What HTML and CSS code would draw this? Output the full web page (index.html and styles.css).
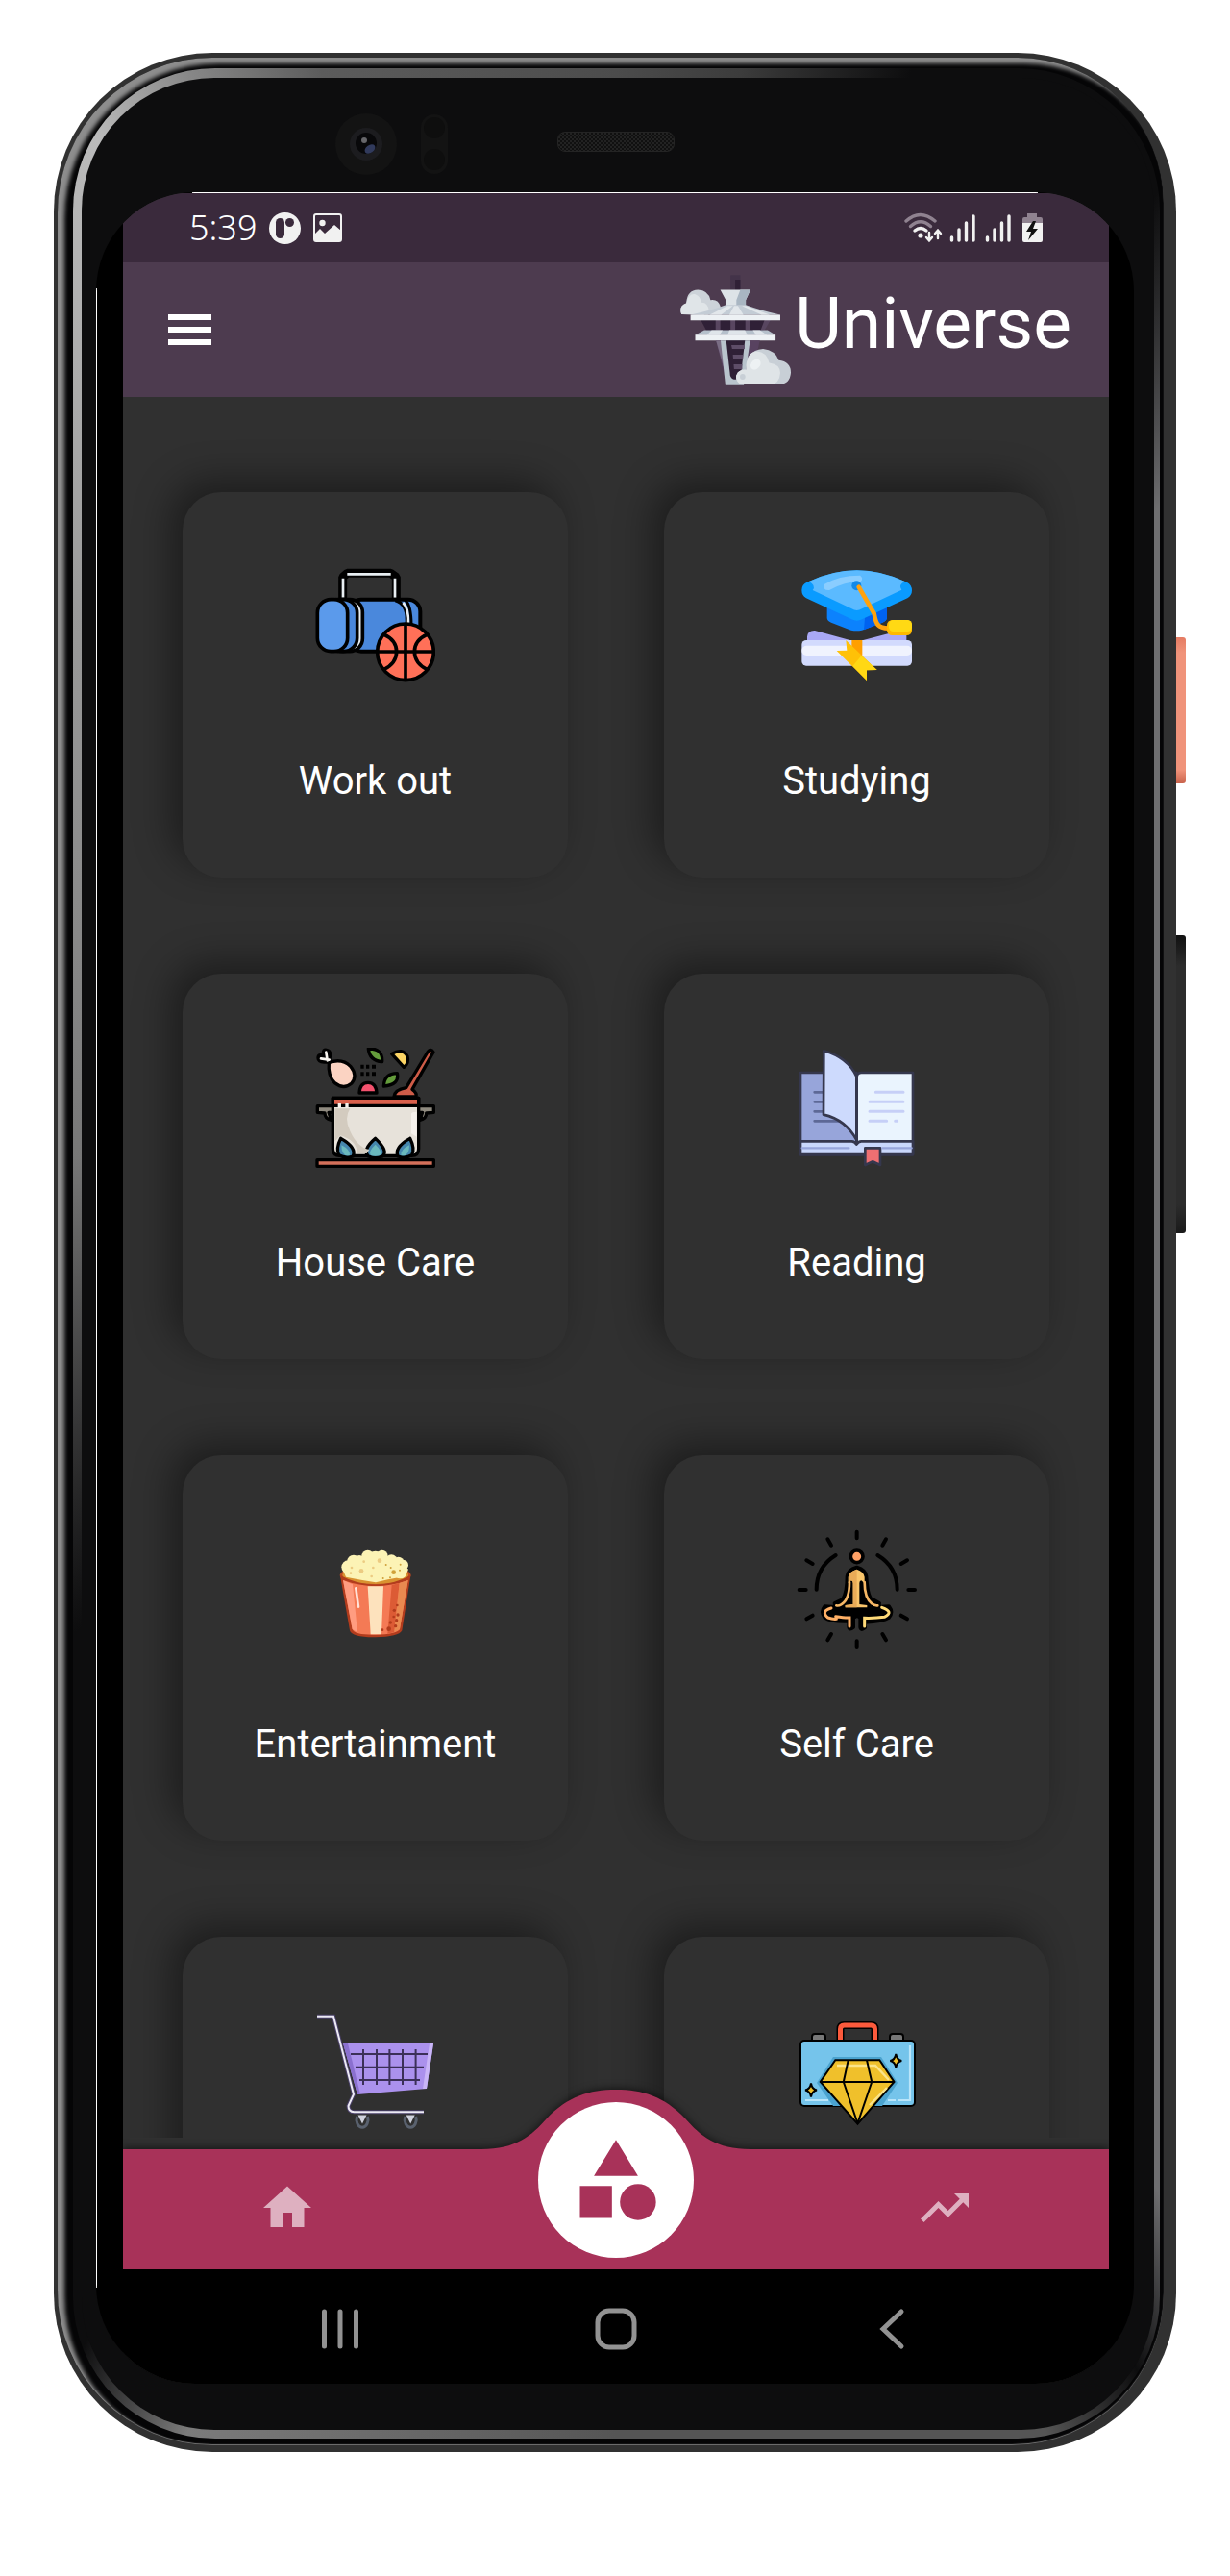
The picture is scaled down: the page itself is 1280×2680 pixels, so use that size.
FILE: index.html
```html
<!DOCTYPE html>
<html lang="en">
<head>
<meta charset="utf-8">
<title>Universe</title>
<meta name="viewport" content="width=device-width, initial-scale=1">
<link rel="stylesheet" href="styles.css">
</head>
<body>
<div class="phone">
  <span class="side-key side-key-power"></span>
  <span class="side-key side-key-volume"></span>
  <div class="rim">
    <div class="band">
      <div class="face">
        <div class="sensors">
          <svg class="camera" viewBox="0 0 117 64" aria-hidden="true">
            <circle cx="32" cy="32" r="32" fill="#131313"/>
            <circle cx="32" cy="32" r="17" fill="#1c1c1f"/>
            <circle cx="32" cy="31" r="11" fill="#08080a"/>
            <ellipse cx="36" cy="37" rx="6" ry="4" fill="#313a5c" transform="rotate(-35 36 37)"/>
            <circle cx="30" cy="28" r="3" fill="#66666a"/>
            <rect x="89" y="1" width="28" height="62" rx="14" fill="#131313"/>
            <circle cx="103" cy="15" r="11" fill="#0e0e0e"/>
            <circle cx="103" cy="48" r="11" fill="#0e0e0e"/>
          </svg>
          <span class="speaker"></span>
        </div>
        <div class="glass">
          <div class="screen">
            <div class="status">
              <span class="clock">5:39</span>
              <svg class="status-app" viewBox="0 0 33 33" aria-hidden="true"><circle cx="16.500" cy="16.500" r="16.500" fill="#f1f1f1"/><rect x="7" y="6" width="9" height="21" rx="4.500" fill="#3a2a3c"/><circle cx="21.500" cy="10.500" r="4.500" fill="#3a2a3c"/></svg>
              <svg class="status-photo" viewBox="0 0 30 30" aria-hidden="true"><rect x="1" y="1" width="28" height="28" rx="2" fill="none" stroke="#f1f1f1" stroke-width="2"/><circle cx="9.500" cy="10" r="3.200" fill="#f1f1f1"/><path d="M2 21l5-5 5 5 10-9 7 6v10H2z" fill="#f1f1f1"/></svg>
              <svg class="status-signals" viewBox="0 0 144 32" aria-hidden="true">
                <g fill="none" stroke-width="3.400" stroke-linecap="round">
                  <path d="M2 9Q16.500-4 32 9" stroke="#8f8290"/>
                  <path d="M6.500 14.500Q17 5 27.500 14.500" stroke="#8f8290"/>
                  <path d="M11 19Q17 14 23 19" stroke="#f1f1f1"/>
                  <path d="M26 21v8m-3-3l3 3.500 3-3.500M35 27v-8m-3 3l3-3.500 3 3.500" stroke="#f1f1f1" stroke-width="2.400"/>
                  <path d="M49.500 26v3M57 18v11M64.500 11v18M72 4v25M86.500 26v3M94 18v11M101.500 11v18M109 4v25" stroke="#f1f1f1"/>
                </g>
                <circle cx="17" cy="24" r="2.600" fill="#f1f1f1"/>
                <path d="M128 1h10v4h4q2 0 2 2v4h-21V7q0-2 2-2h3z" fill="#8f8290"/>
                <path d="M123 11h21v18q0 2-2 2h-17q-2 0-2-2z" fill="#f1f1f1"/>
                <path d="M134 9l-7 11h5l-3 9 10-12h-5l3-8z" fill="#111"/>
              </svg>
            </div>
            <header class="app-bar">
              <button class="menu" aria-label="Menu"><span></span><span></span><span></span></button>
              <div class="brand">
                <svg class="brand-logo" viewBox="165 737 282 346" preserveAspectRatio="none" aria-hidden="true">
                  <path d="M293 738h25v50h-25z" fill="#433349"/><path d="M305 752h13v36h-13z" fill="#2f2036"/>
                  <path d="M168 860Q160 835 180 826Q182 785 210 784Q236 785 242 816Q262 812 268 838L235 862z" fill="#cdd3d9"/>
                  <path d="M168 860Q160 835 180 826Q185 795 202 797Q218 804 218 824Q235 822 238 850L225 862z" fill="#e0e5e8"/>
                  <path d="M267 784h77l-12 32v18h-51v-18z" fill="#dde3e7"/><path d="M318 784h26l-12 32v18h-24v-18z" fill="#a9b6c2"/>
                  <path d="M191 862Q250 846 281 831h51Q370 848 420 862z" fill="#c3ccd5"/>
                  <path d="M240 862l45-28h14l-30 28zM290 862l12-28h10l14 28zM372 862l-50-28h11l60 28z" fill="#e2e7eb"/>
                  <path d="M217 878h179l-20 34H232z" fill="#2f2036"/>
                  <path d="M255 878h12v32h-12zM293 878h12v32h-12zM331 878h12v32h-12zM380 878h16l-16 32h-10z" fill="#584660"/>
                  <path d="M191 862h229v17H191z" fill="#edf1f4"/>
                  <path d="M226 910h162l20 15H203z" fill="#b5c0cb"/><path d="M245 910h28l-8 15h-32zM290 910h40l6 15h-50zM350 910h18l18 15h-28z" fill="#dfe5ea"/>
                  <path d="M203 924h205v18H203z" fill="#edf1f4"/>
                  <path d="M256 942h112l-22 120h-66z" fill="#584260"/>
                  <path d="M256 942h14l14 120z" fill="#7a6d84"/>
                  <path d="M268 942h75l-16 140h-47z" fill="#b9c4cd"/><path d="M282 942h48l-12 122h-16q-8-1-10-13z" fill="#2f2036"/>
                  <path d="M295 957h34v12h-32zM299 987h26v15h-25zM301 1017h22v15h-21z" fill="#5e4d68"/>
                  <path d="M318 1080Q300 1062 312 1042Q320 1032 333 1034Q330 975 376 969Q408 974 416 1004Q447 1008 447 1043Q445 1078 418 1080z" fill="#c8cfd6"/>
                  <path d="M318 1080Q300 1062 312 1042Q320 1032 333 1034Q332 978 360 976Q386 978 392 1012Q420 1016 420 1044Q418 1078 396 1080z" fill="#dfe4e7"/>
                  <ellipse cx="357" cy="1017" rx="12" ry="17" fill="#edf1f3" transform="rotate(25 357 1017)"/><ellipse cx="324" cy="1056" rx="7" ry="9" fill="#c8cfd6"/>
                </svg>
                <span class="brand-name">Universe</span>
              </div>
            </header>
            <main class="categories">
              <button class="card">
                <svg viewBox="84 90 375 375" aria-hidden="true">
                  <path d="M170 190v-66l14-12h136l17 12v66" fill="none" stroke="#000" stroke-width="27" stroke-linejoin="bevel"/><path d="M171 188v-60M184 115h136M333 128v60" fill="none" stroke="#e8eef2" stroke-width="8"/>
                  <rect x="190" y="194" width="222" height="162" rx="38" fill="#4a88dc" stroke="#000" stroke-width="12"/>
                  <path d="M334 197q36 10 36 60v60" fill="none" stroke="#000" stroke-width="10"/><path d="M358 204q20 18 17 70" fill="none" stroke="#e8eef2" stroke-width="8"/><path d="M364 196q20 14 20 80" fill="none" stroke="#000" stroke-width="9"/>
                  <rect x="130" y="194" width="102" height="162" rx="40" fill="#e8eef2" stroke="#000" stroke-width="11"/><rect x="112" y="194" width="103" height="162" rx="42" fill="#4a88dc" stroke="#000" stroke-width="11"/>
                  <rect x="91" y="194" width="94" height="162" rx="42" fill="#5b9aeb" stroke="#000" stroke-width="11"/>
                  <circle cx="366" cy="358" r="88" fill="#ff7058" stroke="#000" stroke-width="11"/><path d="M366 270v176M278 357h176M298 303q40 18 40 54t-40 56M434 303q-40 18-40 54t40 56" fill="none" stroke="#000" stroke-width="11"/>
                </svg>
                <span>Work out</span>
              </button>
              <button class="card">
                <svg viewBox="86 90 375 375" aria-hidden="true">
                  <path d="M181 215h187v37q-2 10-14 14l-64 24q-17 4-34 0l-62-24q-12-5-13-14z" fill="#0c82fd"/><path d="M300 240l68-25v37q-2 10-14 14l-58 23z" fill="#0062f0"/>
                  <path d="M102 165q0-18 16-25Q200 103 274 103T430 140q16 8 16 26 0 15-14 24l-142 66q-16 8-32 0l-142-66q-14-8-14-25z" fill="#0a9bff"/>
                  <path d="M125 138Q200 103 274 103T424 138q-22 10-10 26l-124 59q-16 10-32 0l-122-58q12-14-11-27z" fill="#5bbaff"/>
                  <path d="M172 147q44-28 112-28 12 9 2 19-50 0-98 27-22 1-16-18z" fill="#8acdff"/><circle cx="273" cy="151" r="15" fill="#1189e8"/>
                  <path d="M119 326v-16q2-20 24-19l118 32zM291 322l86-23 52 4v23z" fill="#a9a8f5"/>
                  <rect x="102" y="321" width="344" height="80" rx="14" fill="#d2dafd"/><rect x="102" y="338" width="344" height="31" rx="15" fill="#f0f3fe"/>
                  <path d="M258 321h33v80h-33z" fill="#ff9f00"/><path d="M240 321l97 93-32 1v32l-94-93 32-1z" fill="#ffc107"/><path d="M288 370l49 44-32 1v32l-44-45z" fill="#ffd814"/>
                  <path d="M280 155l48 83c6 34 12 45 45 46" fill="none" stroke="#ffa20e" stroke-width="14" stroke-linecap="round"/>
                  <rect x="368" y="258" width="78" height="48" rx="16" fill="#ffb900"/><rect x="374" y="258" width="72" height="36" rx="14" fill="#ffd914"/>
                </svg>
                <span>Studying</span>
              </button>
              <button class="card">
                <svg viewBox="84 90 375 375" aria-hidden="true">
                  <g stroke="#000" stroke-width="10" stroke-linejoin="round">
                    <path d="M91 272h50v20h-15l8 24q-20-4-20-22l-23-2zM454 272h-50v20h15l-8 24q20-4 20-22l23-2z" fill="#8f8a7f"/>
                    <path d="M139 247h268v158q0 22-22 22H161q-22 0-22-22z" fill="#e7e2da"/>
                    <path d="M139 247h268v24H139z" fill="#d9604c"/>
                    <path d="M90 440h364v20H90z" fill="#d4705a"/>
                    <path d="M330 243q2-22 38-28l68-113q9-10 17 2l-66 116q16 12 12 23z" fill="#cf5c48"/>
                    <path d="M127 136q42-14 67 12 24 30 3 54-24 20-52-2-22-22-18-64z" fill="#fbd3c2"/>
                    <path d="M250 93q46-2 43 41-40-4-43-41zM340 170q8 36-42 40 2-40 42-40z" fill="#649c3b"/>
                    <path d="M323 109q34-20 49 8 6 22-11 34z" fill="#fcd565"/><path d="M222 231q2-32 27-32t27 32z" fill="#f4526e"/>
                    <path d="M164 373q50 28 38 56-24 8-44-4-10-20 6-52zM272 373q42 40 22 56-22 8-44 0-20-20 22-56zM380 373q-50 28-38 56 24 8 44-4 10-20-6-52z" fill="#4586ad"/>
                  </g>
                  <path d="M145 280h48q-20 30 0 70 22 50 60 58l-8 12h-30q0-40-52-56l-18 18z" fill="#d3cbbf"/>
                  <path d="M384 296q0-6 17-6v78l-17-10zM155 264h10v14h-10zM178 264h10v14h-10z" fill="#f5f1ec"/>
                  <path d="M166 394q28 14 26 32-26 6-26-32zM272 392q24 22 14 34-14 5-28 0-10-12 14-34zM378 394q-28 14-26 32 26 6 26-32z" fill="#6ab9bd"/>
                  <path d="M88 122q0-16 16-14 0-18 16-16 16 2 16 20l-4 28-20 0q-24-2-24-18z" fill="#000"/><path d="M102 124l26 4M118 104l4 26" stroke="#f7f4ef" stroke-width="8" stroke-linecap="round"/>
                  <path d="M226 143h10v12h-10zM243 143h10v12h-10zM261 143h12v12h-12zM226 166h10v12h-10zM243 166h10v12h-10zM261 166h12v12h-12z" fill="#000"/>
                </svg>
                <span>House Care</span>
              </button>
              <button class="card">
                <svg viewBox="86 90 375 375" aria-hidden="true">
                  <g stroke="#35374d" stroke-width="8" stroke-linejoin="round">
                    <path d="M98 168h175v256H98z" fill="#97a5da"/><path d="M274 180q2-12 14-12h161v256H274z" fill="#eaf4fe"/>
                    <path d="M98 382h160q10 0 15 10 5-10 15-10h161v41H98z" fill="#c9d7fb"/>
                    <path d="M142 229h30M142 259h30M142 289h30M142 319h75" stroke="#5d6896" stroke-linecap="round"/>
                    <path d="M171 100Q245 120 273 180v198Q240 315 170 299z" fill="#cddafd"/>
                    <path d="M300 403h47v53l-24-11-23 11z" fill="#ee6f72"/>
                  </g>
                  <path d="M333 229h86M314 259h105M314 289h105M314 319h53M394 319h6" stroke="#c6cff7" stroke-width="9" stroke-linecap="round"/><path d="M103 403h146M354 403h91" stroke="#97a5da" stroke-width="7" stroke-linecap="round"/><path d="M274 180v212" stroke="#35374d" stroke-width="6"/>
                </svg>
                <span>Reading</span>
              </button>
              <button class="card">
                <svg viewBox="84 60 375 375" aria-hidden="true">
                  <ellipse cx="272" cy="204" rx="111" ry="34" fill="#b94a24"/><ellipse cx="272" cy="203" rx="103" ry="28" fill="#d99230"/>
                  <path d="M162 204Q272 262 382 204L355 376Q345 396 272 397T192 376z" fill="#b23c1d"/>
                  <path d="M171 219Q272 256 374 219L348 372Q338 388 272 389T200 372z" fill="#f47a55"/>
                  <path d="M171 219l30 13 15 150-16-10z" fill="#ff9c80"/><path d="M248 238h49l-6 150h-34z" fill="#fde2bd"/><path d="M323 234l24-6-16 153-21 5z" fill="#dc5b35"/><path d="M347 228l27-9-26 153-17 9z" fill="#e98950"/>
                  <g fill="#fcf3b5"><circle cx="187" cy="178" r="21"/><circle cx="204" cy="160" r="20"/><circle cx="222" cy="158" r="17"/><circle cx="248" cy="144" r="19"/><circle cx="272" cy="150" r="22"/><circle cx="293" cy="143" r="18"/><circle cx="322" cy="158" r="19"/><circle cx="344" cy="164" r="18"/><circle cx="358" cy="172" r="17"/><circle cx="350" cy="194" r="20"/><path d="M172 190l30-40h135l38 35-10 22-54 10-38 9-46-8-47-9z"/></g>
                  <g fill="#eccb82"><circle cx="285" cy="158" r="7"/><circle cx="228" cy="190" r="7"/><circle cx="236" cy="161" r="4"/><circle cx="198" cy="180" r="4"/><circle cx="260" cy="207" r="4"/><circle cx="195" cy="197" r="4"/><circle cx="265" cy="180" r="4"/></g>
                  <g fill="#d0a13a"><circle cx="329" cy="194" r="7"/><circle cx="305" cy="171" r="3"/><circle cx="320" cy="180" r="3"/><circle cx="348" cy="188" r="3"/><circle cx="296" cy="213" r="3"/><circle cx="318" cy="211" r="3"/><circle cx="350" cy="170" r="3"/></g>
                  <g fill="#b23c1d"><circle cx="340" cy="297" r="4"/><circle cx="331" cy="313" r="5"/><circle cx="342" cy="327" r="5"/><circle cx="329" cy="333" r="4"/><circle cx="338" cy="344" r="5"/><circle cx="319" cy="351" r="5"/><circle cx="335" cy="362" r="5"/><circle cx="314" cy="371" r="7"/><circle cx="294" cy="374" r="4"/></g>
                  <path d="M211 244l8 58" stroke="#ffe3da" stroke-width="8" stroke-linecap="round"/>
                </svg>
                <span>Entertainment</span>
              </button>
              <button class="card">
                <svg viewBox="86 90 375 375" aria-hidden="true">
                  <g fill="none" stroke="#000" stroke-width="12" stroke-linecap="round"><path d="M274 98v20M183 121l11 19M365 121l-11 19M117 187l19 11M431 187l-19 11M94 279h21M435 279h20M117 370l19-11M431 370l-19-11M183 436l11-19M365 436l-11-19M274 439v20M148 278q0-70 60-107M400 278q0-70-61-107"/></g>
                  <circle cx="274" cy="175" r="19" fill="#ffa066" stroke="#000" stroke-width="11"/>
                  <path d="M274 209q27 8 29 28 3 50 13 68l28 16-4 12 34-2q14 18 0 34-20 12-75 15v17q-12 10-14-1v-30l-10-7-12 7v30q-12 10-14-1v-18q-57 2-75-12-14-17 0-34l33 2-2-12 25-12q14-22 14-72 2-20 30-28z" fill="#000" stroke="#000" stroke-width="12" stroke-linejoin="round"/>
                  <path d="M274 215q22 8 24 24v20l-10-9q-6 0-6 8v66l24 3v7h-68v-7l24-3v-66q0-8-6-8l-9 9v-20q2-16 27-24z" fill="#f9c56b"/><path d="M274 215q-24 8-26 24v20l8-9q6 0 6 8v66l-24 3v7h36z" fill="#e9ab57"/>
                  <path d="M251 255q0 56-26 70-8 5-15 3M298 255q0 50 23 67 8 7 18 6" fill="none" stroke="#f6b765" stroke-width="8" stroke-linecap="round"/>
                  <path d="M194 336q-34 10-10 30 14 5 26 4M208 362q30 5 43 4v27" fill="none" stroke="#ffb066" stroke-width="9" stroke-linecap="round"/><path d="M352 334q40 14 8 30-30 4-62 3v26" fill="none" stroke="#ffda78" stroke-width="9" stroke-linecap="round"/>
                </svg>
                <span>Self Care</span>
              </button>
              <button class="card" aria-label="Shopping">
                <svg viewBox="0 0 125 125" aria-hidden="true">
                  <path d="M29 34h94l-7 47-72 6z" fill="#ab91ed"/><path d="M119 34h4l-7 47h-4z" fill="#c9b5f7"/><path d="M29 34l15 53h3l-13-53z" fill="#8a70cf"/>
                  <path d="M37 45h80M42 58.700h71M46 72h63M50 40v37M64 40v37M77.400 40v37M91 40v37M104.600 40v37" stroke="#3b2f58" stroke-width="2"/>
                  <path d="M2 5.700h17L40 87l-5.500 12q0 6 6 6.300H113" fill="none" stroke="#4a4069" stroke-width="4"/><path d="M2 5.700h17L40 87l-5.500 12q0 6 6 6.300H113" fill="none" stroke="#eceaf4" stroke-width="2"/>
                  <path d="M43.500 110a6 8 0 1 0 11 0M93.700 110a6 8 0 1 0 11 0" fill="none" stroke="#59616e" stroke-width="3"/><path d="M44.500 108.500h9l-4.500 9zM94.700 108.500h9l-4.500 9z" fill="#cfd2dd"/>
                </svg>
              </button>
              <button class="card" aria-label="Business">
                <svg viewBox="0 0 125 125" aria-hidden="true">
                  <path d="M16 32v-5q0-3 3-3h8q3 0 3 3v5M97 32v-5q0-3 3-3h8q3 0 3 3v5" fill="#777" stroke="#000" stroke-width="2"/>
                  <path d="M45.500 32V19q0-4 4-4h28q4 0 4 4v13" fill="none" stroke="#000" stroke-width="8"/><path d="M45.500 31V19q0-4 4-4h28q4 0 4 4v12" fill="none" stroke="#fb5a3c" stroke-width="5"/>
                  <rect x="4" y="31" width="119" height="68" rx="4" fill="#75c4eb" stroke="#000" stroke-width="2"/>
                  <path d="M118 36v57h-12m-3 0h-8M9 93h24" fill="none" stroke="#b9e5fa" stroke-width="2.200"/>
                  <path d="M38 48h50l17 27-16 24H38L21 75z" fill="#4ba3cf"/>
                  <path d="M40.300 51.300h46L101.500 74l-38 43.700L24.700 74z" fill="#f0c02b" stroke="#000" stroke-width="2"/><path d="M42 57h40l14 15M94 80L76 98" fill="none" stroke="#fbe48a" stroke-width="2.400"/>
                  <path d="M24.700 74h77M53.700 51.300L48.800 74l14.700 43M73 51.300L78.200 74l-14.700 43" fill="none" stroke="#000" stroke-width="2"/>
                  <path d="M103.300 45q1 6 6 7-5 1-6 7-1-6-6-7 5-1 6-7zM15 75.500q1 6 6 7-5 1-6 7-1-6-6-7 5-1 6-7z" fill="#f0c02b" stroke="#000" stroke-width="2"/>
                </svg>
              </button>
            </main>
            <nav class="tabs">
              <svg class="tabs-bump" viewBox="0 0 280 63" aria-hidden="true"><path d="M0 62C36 62 52 48 68 30C90 7 112 0 140 0S190 7 212 30C228 48 244 62 280 62v1H0z" fill="#a83259"/></svg>
              <a class="tab" href="#home" aria-label="Home"><svg viewBox="0 0 24 24"><path d="M10 20v-6h4v6h5v-8h3L12 3 2 12h3v8z"/></svg></a>
              <a class="tab tab-active" href="#categories" aria-label="Categories"><svg viewBox="0 0 24 24"><path d="M12 2l-5.500 9h11zM3 13.500h8v8H3z"/><circle cx="17.500" cy="17.500" r="4.500"/></svg></a>
              <a class="tab" href="#trends" aria-label="Trends"><svg viewBox="0 0 24 24"><path d="M16 6l2.290 2.290-4.880 4.880-4-4L2 16.590 3.410 18l6-6 4 4 6.300-6.290L22 12V6z"/></svg></a>
            </nav>
            <div class="system-nav">
              <button aria-label="Recents"><svg viewBox="0 0 44 44"><path d="M5.500 4v36M22 4v36M38.500 4v36"/></svg></button>
              <button aria-label="Home"><svg viewBox="0 0 44 44"><rect x="3" y="3" width="38" height="38" rx="12"/></svg></button>
              <button aria-label="Back"><svg viewBox="0 0 44 44"><path d="M32 4L13 22l19 18"/></svg></button>
            </div>
          </div>
        </div>
      </div>
    </div>
  </div>
</div>
</body>
</html>
```
FILE: styles.css
```css
* { box-sizing: border-box; }

body {
  margin: 0;
  padding: 55px 56px 129px;
  background: #fff;
  font-family: Roboto, sans-serif;
  color: #fff;
}

button {
  margin: 0;
  padding: 0;
  border: 0;
  background: none;
  color: inherit;
  font: inherit;
  cursor: pointer;
}

svg { display: block; }

/* Phone body: each layer is padded to reveal the one beneath it */
.phone {
  position: relative;
  display: flex;
  height: calc(100vh - 184px);
  min-height: 1200px;
  padding: 5px 13px 7px 4px;
  border-radius: 165px;
  background: #313131;
}

.rim {
  flex: 1;
  display: flex;
  padding: 11px 4px 7px 16px;
  border-radius: 161px 152px 158px 161px;
  background: #050506;
  box-shadow: inset 7px 6px 4px #8d8d8d, inset 0 -1px 1px #777;
}

.band {
  flex: 1;
  display: flex;
  padding: 10px 6px 9px 9px;
  border-radius: 148px;
  background: conic-gradient(#4c4c4c 0deg, #3c3c3c 6deg, #0d0d0e 14deg, #0d0d0e 27deg, #6e6e70 36deg, #6e6e70 150deg, #0d0d0e 155deg, #555 160deg, #555 180deg, #7b7b7b 200deg, #0d0d0e 206deg, #0d0d0e 235deg, #777 280deg, #999 320deg, #bbb 335deg, #888 340deg, #5c5c5c 346deg, #4c4c4c 360deg);
}

.face {
  flex: 1;
  display: flex;
  flex-direction: column;
  min-width: 0;
  padding: 0 21px 48px 15px;
  border-radius: 138px;
  background: #0d0d0e;
}

.side-key {
  position: absolute;
  left: 100%;
  width: 10px;
  border-radius: 0 3px 3px 0;
}

.side-key-power {
  top: 608px;
  height: 152px;
  background: linear-gradient(#e57b62, #f0937a 16px, #f0937a 138px, #c9634c);
}

.side-key-volume {
  top: 918px;
  height: 310px;
  background: linear-gradient(#111, #2c2c2c 32px, #2c2c2c 280px, #1a1a1a);
}

.sensors {
  display: flex;
  align-items: center;
  gap: 114px;
  height: 119px;
  padding: 18px 0 0 249px;
}

.camera { width: 117px; height: 64px; }

.speaker {
  width: 122px;
  height: 21px;
  margin-bottom: 4px;
  border: 1px solid #242424;
  border-radius: 8px;
  background: repeating-conic-gradient(#101010 0 25%, #222 0 50%) 0 0 / 4px 4px;
}

/* Hairline highlights run along the straight top and left glass edges */
.glass {
  flex: 1;
  display: flex;
  min-height: 0;
  padding: 1px 26px 0 28px;
  border-radius: 103px;
  background:
    linear-gradient(#fff, #fff) center top / calc(100% - 200px) 1px no-repeat,
    linear-gradient(#fff, #fff) left center / 1px calc(100% - 200px) no-repeat,
    #000;
  overflow: hidden;
}

.screen {
  flex: 1;
  display: flex;
  flex-direction: column;
  min-width: 0;
  background: #303030;
}

.status {
  display: flex;
  align-items: center;
  height: 72px;
  padding: 0 69px;
  background: #3a2a3c;
}

.clock {
  margin-right: 13px;
  font: 300 36px/48px "Noto Sans", sans-serif;
}

.status-app { width: 33px; height: 33px; }
.status-photo { width: 30px; height: 30px; margin-left: 13px; }
.status-signals { width: 144px; height: 32px; margin-left: auto; }

.app-bar {
  display: flex;
  align-items: center;
  justify-content: space-between;
  height: 140px;
  padding: 0 39px 0 47px;
  background: #4d3b4f;
}

.menu {
  display: flex;
  flex-direction: column;
  gap: 7px;
  width: 45px;
}

.menu span { height: 6px; background: #fff; }

.brand { display: flex; align-items: center; gap: 4px; }
.brand-logo { width: 115px; height: 115px; }
.brand-name { padding-bottom: 14px; font-size: 75px; line-height: 90px; }

.categories {
  flex: 1;
  display: grid;
  grid-template-columns: 1fr 1fr;
  align-content: start;
  gap: 100px;
  min-height: 0;
  margin-bottom: 12px;
  padding: 99px 62px;
  overflow: auto;
  scrollbar-width: none;
}

.card {
  display: flex;
  flex-direction: column;
  align-items: center;
  gap: 75px;
  aspect-ratio: 1;
  padding-top: 77px;
  border-radius: 40px;
  background: #303030;
  box-shadow: -12px -12px 38px rgba(0, 0, 0, 0.4);
  font-size: 40px;
  line-height: 48px;
}

.card svg { width: 125px; height: 125px; }

.tabs {
  position: relative;
  display: flex;
  align-items: center;
  height: 125px;
  background: #a83259;
  filter: drop-shadow(0 -1px 4px rgba(0, 0, 0, 0.6));
}

.tabs-bump {
  position: absolute;
  bottom: calc(100% - 1px);
  left: 50%;
  width: 280px;
  height: 63px;
  transform: translateX(-50%);
}

.tab {
  position: relative;
  flex: 1;
  display: flex;
  justify-content: center;
  padding-bottom: 4px;
}

.tab svg { width: 60px; height: 60px; fill: #deb0c0; }

.tab-active {
  flex: 0 0 162px;
  align-items: center;
  height: 162px;
  margin: -62px calc((100% / 3 - 162px) / 2) 0;
  padding: 0;
  border-radius: 50%;
  background: #fff;
}

.tab-active svg { width: 100px; height: 100px; fill: #a83259; }

.system-nav {
  position: relative;
  display: flex;
  align-items: center;
  height: 119px;
  padding: 4px 8% 0;
  background: #000;
}

.system-nav button { flex: 1; display: flex; justify-content: center; }

.system-nav svg {
  width: 44px;
  height: 44px;
  fill: none;
  stroke: #929292;
  stroke-width: 5;
  stroke-linecap: round;
}
```
